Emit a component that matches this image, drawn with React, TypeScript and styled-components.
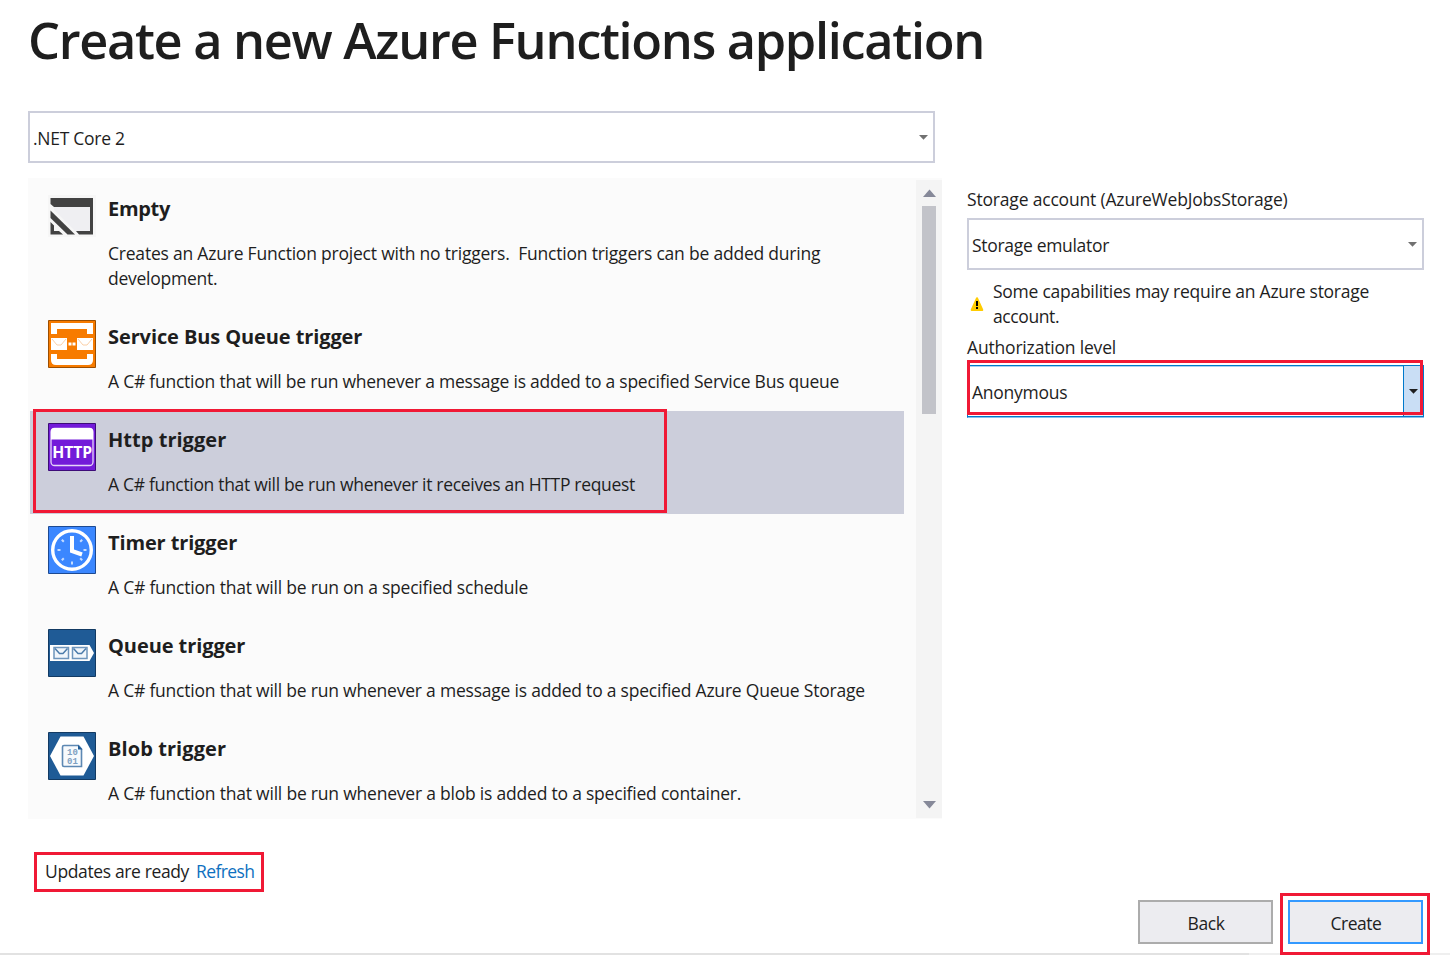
import React from "react";
import styled, { createGlobalStyle, css } from "styled-components";

const GlobalStyle = createGlobalStyle`
  *, *::before, *::after { box-sizing: border-box; }
  body { margin: 0; background: #fff; }
`;

const Page = styled.main`
  display: flex;
  flex-direction: column;
  width: 1450px;
  height: 955px;
  overflow: hidden;
  background: #fff;
  color: #1e1e1e;
  font-family: "Segoe UI", "Open Sans", sans-serif;
  font-size: 17.5px;
  line-height: 25px;
`;

const Title = styled.h1`
  margin: 0;
  padding-left: 28px;
  height: 111px;
  font-size: 50.5px;
  font-weight: 600;
  line-height: 79px;
  letter-spacing: -1.31px;
  white-space: nowrap;
`;

const Text = styled.span<{ $tracking?: number }>`
  display: block;
  white-space: pre;
  letter-spacing: ${({ $tracking = -0.22 }) => $tracking}px;
`;

const Columns = styled.div`
  display: grid;
  grid-template-columns: 915px 457px;
  column-gap: 24px;
  margin-left: 28px;
  height: 708px;
`;

const LeftColumn = styled.section`
  display: flex;
  flex-direction: column;
  gap: 15px;
`;

const RightColumn = styled.section`
  display: flex;
  flex-direction: column;
  padding-top: 76px;
`;

const Select = styled.div<{ $width: number; $focused?: boolean }>`
  display: flex;
  align-items: center;
  justify-content: space-between;
  width: ${({ $width }) => $width}px;
  height: 52px;
  padding: 2px 5px 0 3px;
  border: 2px solid #cccedb;
  background: #fff;

  > svg {
    margin-bottom: 2px;
  }
  ${({ $focused }) =>
    $focused &&
    css`
      height: 53px;
      align-items: stretch;
      padding: 0 0 0 4px;
      border-width: 1px 0 0 1px;
      border-color: #0079cb;
      border-bottom: 1px solid #88c1ea;
      box-shadow: inset 0 -1px #0079cb, inset 0 1px #a9d3f0;
    `}
`;

const FocusedValue = styled.div`
  display: flex;
  align-items: center;
  padding-top: 2px;
`;

const DropButton = styled.div`
  display: flex;
  align-items: center;
  justify-content: center;
  width: 21px;
  padding-top: 1px;
  background: #c9def5;
  border: solid #0079cb;
  border-width: 0 1px 1px 1px;
`;

const TemplateList = styled.div`
  display: flex;
  width: 914px;
  height: 641px;
  padding-top: 2px;
  background: #fbfbfb;
`;

const Items = styled.div`
  width: 876px;
  height: 639px;
  margin-right: 12px;
  padding-left: 2px;
  overflow: hidden;
`;

const Item = styled.article<{ $selected?: boolean }>`
  display: flex;
  gap: 12px;
  min-height: 103px;
  padding: 12px 0 16px 18px;
  background: ${({ $selected }) => ($selected ? "#cccedb" : "transparent")};
`;

const ItemText = styled.div`
  padding-top: 4px;
`;

const ItemName = styled.h2<{ $tracking: number }>`
  margin: 0 0 20px;
  font-size: 20px;
  font-weight: 700;
  line-height: 26px;
  letter-spacing: ${({ $tracking }) => $tracking}px;
`;

const ItemLines = styled.div`
  margin-top: -1px;
  padding-bottom: 1px;
`;

const Scrollbar = styled.div`
  display: flex;
  flex-direction: column;
  align-items: center;
  width: 26px;
  height: 638px;
  padding: 9px 0;
  background: #f4f4f4;
`;

const Thumb = styled.div`
  width: 14px;
  height: 208px;
  margin: 9px 0 auto;
  background: #c2c3c9;
`;

const Label = styled.div`
  height: 31px;
  display: flex;
  align-items: flex-start;
`;

const Warning = styled.div`
  display: flex;
  gap: 8px;
  height: 64px;
  padding: 9px 0 0 2px;
`;

const WarningIcon = styled.svg`
  margin-top: 17px;
`;

const FieldLabel = styled(Label)`
  padding-top: 1px;
`;

const Footer = styled.footer`
  display: flex;
  justify-content: space-between;
  height: 134px;
  padding: 0 20px 0 34px;
`;

const Updates = styled.div`
  display: flex;
  align-items: center;
  gap: 7px;
  width: 230px;
  height: 40px;
  margin-top: 33px;
  padding: 0 0 2px 8px;
  border: 3px solid #f01935;
`;

const Link = styled.a`
  color: #0e70c0;
  white-space: nowrap;
  letter-spacing: -0.6px;
`;

const Actions = styled.div`
  display: flex;
  gap: 7px;
  padding-top: 74px;
`;

const Button = styled.button<{ $primary?: boolean }>`
  display: flex;
  align-items: center;
  justify-content: center;
  width: 135px;
  height: 44px;
  margin-top: ${({ $primary }) => ($primary ? 0 : 7)}px;
  padding: 3px 0 0 1px;
  border: 2px solid ${({ $primary }) => ($primary ? "#3399ff" : "#acacac")};
  background: #ececf0;
  color: #1e1e1e;
  font: inherit;
`;

const Highlight = styled.div`
  position: relative;
  z-index: 1;
  height: 62px;
  width: 150px;
  padding: 4px 5px;
  border: 3px solid #f01935;
`;

const Overlay = styled.div<{ $x: number; $y: number; $w: number; $h: number }>`
  position: absolute;
  left: ${({ $x }) => $x}px;
  top: ${({ $y }) => $y}px;
  width: ${({ $w }) => $w}px;
  height: ${({ $h }) => $h}px;
  border: 3px solid #f01935;
  pointer-events: none;
`;

const WindowEdge = styled.div`
  height: 2px;
  flex: none;
  background: linear-gradient(to right, #e2e2e2 1249px, #efefef 1249px);
`;

const Caret = ({ color = "#717171" }: { color?: string }) => (
  <svg width="9" height="5" viewBox="0 0 9 5">
    <path d="M0 0h9L4.5 4.7z" fill={color} />
  </svg>
);

const ScrollArrow = ({ down }: { down?: boolean }) => (
  <svg width="13" height="8" viewBox="0 0 13 8">
    <path d={down ? "M0 0h13L6.5 7.5z" : "M0 8h13L6.5 .5z"} fill="#868999" />
  </svg>
);

const EmptyIcon = () => (
  <svg width="48" height="48" viewBox="0 0 48 48">
    <path d="M0 3h48v42H0z" fill="#f6f6f6" />
    <path d="M6 14h36v27H29L6 18z" fill="#efeff2" />
    <path d="M2.500 6H45v9H6l-3.500-3z" fill="#424242" />
    <path d="M42 14h3v28.500H31l-3-3.500h14z" fill="#424242" />
    <path d="M2.500 18.500 27 42.500h-7.500L2.500 26z" fill="#424242" />
    <path d="M2.500 30l3.500 3.500V39h5l4 3.500H2.500z" fill="#424242" />
  </svg>
);

const ServiceBusIcon = () => (
  <svg width="48" height="48" viewBox="0 0 48 48">
    <path d="M.5.5h47v47H.5z" fill="#f77b00" stroke="#9c4e00" />
    <path d="M3 3h42v11h-6V9H9v5H3zM3 34h6v5h30v-5h6v6q0 5-5 5H8q-5 0-5-5z" fill="#fff" />
    <path d="M3 18h16v12H3zM29 18h16v12H29zM20.500 22.500h3v3h-3zM24.500 22.500h3v3h-3z" fill="#fff" />
    <path d="M4 19l5 6h4l5-6M30 19l5 6h4l5-6" fill="none" stroke="#fbd0a8" strokeWidth="1" />
  </svg>
);

const HttpLabel = styled.text`
  font-family: "Open Sans", sans-serif;
  font-size: 16px;
  font-weight: 700;
  fill: #fff;
`;

const HttpIcon = () => (
  <svg width="48" height="48" viewBox="0 0 48 48">
    <path d="M.5.5h47v47H.5z" fill="#731bd9" stroke="#3d0c78" />
    <rect x="3" y="5.500" width="42" height="37" rx="3.500" fill="none" stroke="#e6d5f9" strokeWidth="1.300" />
    <path d="M3 16.500V8q0-3 3-3h36q3 0 3 3v8.500z" fill="#fff" />
    <HttpLabel x="4.200" y="34.500" textLength="40" lengthAdjust="spacingAndGlyphs">HTTP</HttpLabel>
  </svg>
);

const TimerIcon = () => (
  <svg width="48" height="48" viewBox="0 0 48 48">
    <path d="M.5.5h47v47H.5z" fill="#3b87ff" stroke="#1d4a92" />
    <circle cx="24" cy="24" r="19.300" fill="none" stroke="#fff" strokeWidth="3.400" />
    <path d="M24 10v15l10 3.500" fill="none" stroke="#fff" strokeWidth="4" />
    <path
      d="M13.800 13.800l2 2M34.200 13.800l-2 2M13.800 34.200l2-2M34.200 34.200l-2-2M9.500 24h3M35.500 24h3M24 35.500v3"
      stroke="#c5dcff"
      strokeWidth="2"
    />
  </svg>
);

const QueueIcon = () => (
  <svg width="48" height="48" viewBox="0 0 48 48">
    <path d="M.5.5h47v47H.5z" fill="#1f5b96" stroke="#123a63" />
    <path d="M2 16h39.500l4.500 8-4.500 8H2z" fill="#fff" />
    <path d="M6 18.500h14.500v11H6zM24.500 18.500H39v11H24.500z" fill="#f1f6fb" stroke="#6e95bc" strokeWidth="1.500" />
    <path d="M7 19.500l4.500 5h3.500l4.500-5M25.500 19.500l4.500 5h3.500l4.500-5" fill="none" stroke="#4c7cab" strokeWidth="1.500" />
  </svg>
);

const BlobDigits = styled.text`
  font-family: "Liberation Mono", monospace;
  font-size: 9px;
  font-weight: 700;
  fill: #7d9fc1;
`;

const BlobIcon = () => (
  <svg width="48" height="48" viewBox="0 0 48 48">
    <path d="M.5.5h47v47H.5z" fill="#1f5b96" stroke="#123a63" />
    <path d="M12.500 4.500h23L46 24 35.500 43.500h-23L2 24z" fill="#fff" />
    <path d="M16 13.500h14.500l3 3.500v17.500H16q-1.500 0-1.500-1.500V15q0-1.500 1.500-1.500z" fill="#f7fafd" stroke="#5d88b3" strokeWidth="1.600" />
    <path d="M30 13l4.500 4.500H30z" fill="#1f5b96" />
    <BlobDigits x="19" y="23">10</BlobDigits>
    <BlobDigits x="19" y="32">01</BlobDigits>
  </svg>
);

type Line = { text: string; tracking: number };
type Template = {
  name: string;
  tracking: number;
  icon: React.ReactNode;
  lines: Line[];
  selected?: boolean;
};

const templates: Template[] = [
  {
    name: "Empty",
    tracking: -0.3,
    icon: <EmptyIcon />,
    lines: [
      { text: "Creates an Azure Function project with no triggers.  Function triggers can be added during", tracking: -0.212 },
      { text: "development.", tracking: -0.25 },
    ],
  },
  {
    name: "Service Bus Queue trigger",
    tracking: -0.1,
    icon: <ServiceBusIcon />,
    lines: [{ text: "A C# function that will be run whenever a message is added to a specified Service Bus queue", tracking: -0.236 }],
  },
  {
    name: "Http trigger",
    tracking: 0.03,
    icon: <HttpIcon />,
    lines: [{ text: "A C# function that will be run whenever it receives an HTTP request", tracking: -0.315 }],
    selected: true,
  },
  {
    name: "Timer trigger",
    tracking: -0.13,
    icon: <TimerIcon />,
    lines: [{ text: "A C# function that will be run on a specified schedule", tracking: -0.218 }],
  },
  {
    name: "Queue trigger",
    tracking: -0.08,
    icon: <QueueIcon />,
    lines: [{ text: "A C# function that will be run whenever a message is added to a specified Azure Queue Storage", tracking: -0.215 }],
  },
  {
    name: "Blob trigger",
    tracking: 0.08,
    icon: <BlobIcon />,
    lines: [{ text: "A C# function that will be run whenever a blob is added to a specified container.", tracking: -0.213 }],
  },
];

export default function App() {
  return (
    <>
      <GlobalStyle />
      <Page>
        <Title>Create a new Azure Functions application</Title>
        <Columns>
          <LeftColumn>
            <Select $width={907}>
              <Text $tracking={-0.28}>.NET Core 2</Text>
              <Caret />
            </Select>
            <TemplateList>
              <Items>
                {templates.map((t) => (
                  <Item key={t.name} $selected={t.selected}>
                    {t.icon}
                    <ItemText>
                      <ItemName $tracking={t.tracking}>{t.name}</ItemName>
                      <ItemLines>
                        {t.lines.map((l) => (
                          <Text key={l.text} $tracking={l.tracking}>{l.text}</Text>
                        ))}
                      </ItemLines>
                    </ItemText>
                  </Item>
                ))}
              </Items>
              <Scrollbar>
                <ScrollArrow />
                <Thumb />
                <ScrollArrow down />
              </Scrollbar>
            </TemplateList>
          </LeftColumn>
          <RightColumn>
            <Label>
              <Text $tracking={-0.18}>Storage account (AzureWebJobsStorage)</Text>
            </Label>
            <Select $width={457}>
              <Text $tracking={-0.31}>Storage emulator</Text>
              <Caret />
            </Select>
            <Warning>
              <WarningIcon width="16" height="16" viewBox="0 0 16 16">
                <path d="M8 2.200 13.300 14H2.700z" fill="#fc0" stroke="#fc0" strokeWidth="2" strokeLinejoin="round" />
                <path d="M7 5h2v5H7zM7 11h2v2H7z" fill="#000" />
              </WarningIcon>
              <div>
                <Text $tracking={-0.26}>Some capabilities may require an Azure storage</Text>
                <Text $tracking={-0.4}>account.</Text>
              </div>
            </Warning>
            <FieldLabel>
              <Text $tracking={-0.18}>Authorization level</Text>
            </FieldLabel>
            <Select $width={457} $focused>
              <FocusedValue>
                <Text $tracking={-0.26}>Anonymous</Text>
              </FocusedValue>
              <DropButton>
                <Caret color="#1e1e1e" />
              </DropButton>
            </Select>
          </RightColumn>
        </Columns>
        <Footer>
          <Updates>
            <Text $tracking={-0.37}>Updates are ready</Text>
            <Link>Refresh</Link>
          </Updates>
          <Actions>
            <Button>
              <Text $tracking={-0.45}>Back</Text>
            </Button>
            <Highlight>
              <Button $primary>
                <Text $tracking={-0.5}>Create</Text>
              </Button>
            </Highlight>
          </Actions>
        </Footer>
        <WindowEdge />
        <Overlay $x={33} $y={409} $w={634} $h={104} />
        <Overlay $x={967} $y={360} $w={456} $h={55} />
      </Page>
    </>
  );
}
